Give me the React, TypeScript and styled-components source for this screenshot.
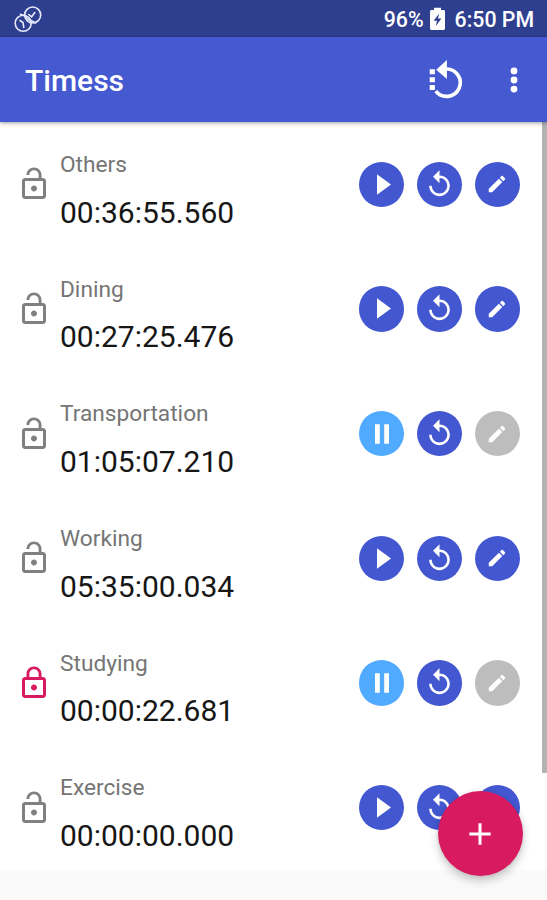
import React from 'react';
import styled, { createGlobalStyle } from 'styled-components';

const Global = createGlobalStyle`
  *, *::before, *::after { box-sizing: border-box; }
  body { margin: 0; background: #fafafa; font-family: Roboto, sans-serif; overflow: hidden; }
  svg { display: block; flex: none; }
`;

const Screen = styled.div`
  position: relative;
  width: 547px;
  height: 900px;
  display: flex;
  flex-direction: column;
  background: #fafafa;
  overflow: hidden;
`;

const StatusBar = styled.header`
  height: 37px;
  flex: none;
  display: flex;
  align-items: center;
  justify-content: space-between;
  padding: 0 13px 0 13px;
  background: #2f3f8f;
  color: #fff;
`;

const StatusInfo = styled.div`
  display: flex;
  align-items: center;
  font-size: 21.3px;
  font-weight: 500;
  line-height: 37px;
  padding-top: 2px;
`;

const BatterySlot = styled.span`
  display: flex;
  margin: 0 10px 3px 6px;
`;

const Toolbar = styled.div`
  height: 85px;
  flex: none;
  z-index: 1;
  display: flex;
  align-items: center;
  padding: 0 29.5px 0 25px;
  background: #4559d0;
  color: #fff;
  box-shadow: 0 1px 4px rgba(0, 0, 0, 0.4);
`;

const Title = styled.h1`
  flex: 1;
  margin: 3px 0 0;
  font-size: 30px;
  font-weight: 500;
  line-height: 40px;
`;

const ToolButton = styled.button`
  display: flex;
  padding: 0;
  border: 0;
  background: none;
  color: inherit;
  & + & { margin-left: 45px; }
`;

const Body = styled.main`
  display: flex;
  height: 748px;
  flex: none;
  background: #fff;
`;

const List = styled.ul`
  flex: 1;
  margin: 0;
  padding: 0;
  list-style: none;
  display: grid;
  grid-template-rows: repeat(6, 1fr);
`;

const Scrollbar = styled.div`
  width: 5px;
  height: 651px;
  background: #b3b3b3;
`;

const Row = styled.li`
  display: flex;
  align-items: center;
  padding: 0 22.3px 0 15.7px;
`;

const LockSlot = styled.span<{ $locked?: boolean }>`
  display: flex;
  width: 44.3px;
  color: ${(p) => (p.$locked ? '#d81b60' : '#808080')};
`;

const Info = styled.div`
  flex: 1;
  display: flex;
  flex-direction: column;
  gap: 11.5px;
  padding-top: 13px;
`;

const Label = styled.span`
  font-size: 22.7px;
  line-height: 32px;
  color: #757575;
`;

const Time = styled.span`
  font-size: 30px;
  line-height: 40px;
  color: #161616;
`;

const Actions = styled.div`
  display: flex;
  gap: 12.6px;
`;

const RoundButton = styled.button<{ $tone: string }>`
  width: 45.2px;
  height: 45.2px;
  padding: 0;
  border: 0;
  border-radius: 50%;
  display: flex;
  align-items: center;
  justify-content: center;
  background: ${(p) => p.$tone};
  color: #fff;
`;

const Fab = styled.button`
  position: absolute;
  right: 24.3px;
  bottom: 24px;
  z-index: 2;
  width: 85px;
  height: 85px;
  padding: 0;
  border: 0;
  border-radius: 50%;
  display: flex;
  align-items: center;
  justify-content: center;
  background: #d81b60;
  box-shadow: 0 5px 10px rgba(0, 0, 0, 0.2), 0 1px 4px rgba(0, 0, 0, 0.08);
`;

const BLUE = '#4357d0';
const SKY = '#50aaff';
const GREY = '#bdbdbd';

const ClocksIcon = () => (
  <svg width="30" height="32" viewBox="0 0 30 32" fill="none" stroke="#e6eafc" strokeWidth="1.6" strokeLinecap="round">
    <circle cx="10.2" cy="20.3" r="8" />
    <circle cx="19.7" cy="12" r="8" />
    <path d="M7 17.500l3 2 .8 5M15.800 11.500l2.800 2.300 3.200-4.300M7.500 11.200c4 .3 5 3.300 7.500 5s4.500 1 7.500 3.800" />
  </svg>
);

const BatteryIcon = () => (
  <svg width="15" height="23" viewBox="0 0 15 23">
    <path fill="#fff" d="M1.4 3H4V.8h7V3h2.6c.8 0 1.4.6 1.4 1.4v17.2c0 .8-.6 1.4-1.4 1.4H1.4C.6 23 0 22.4 0 21.6V4.400C0 3.600.6 3 1.400 3z" />
    <path fill="#2f3f8f" d="M9.200 6.500L3.600 13.700H7L5.800 19l5.600-7.500H8z" />
  </svg>
);

const ResetAllIcon = () => (
  <svg width="36" height="41" viewBox="0 0 36 41">
    <path fill="#fff" d="M.7 10.200h5.200v5H.7zM.7 18.200h5.200v5H.7zM.7 26h5.200v5H.7zM7.200 10.700L17.900 1v19z" />
    <path fill="none" stroke="#fff" strokeWidth="3.700" d="M17 10a13.700 13.700 0 1 1-10.200 22.200" />
  </svg>
);

const MoreIcon = () => (
  <svg width="8" height="26" viewBox="0 0 8 26" fill="#fff">
    <circle cx="4" cy="3.900" r="3.400" />
    <circle cx="4" cy="13" r="3.400" />
    <circle cx="4" cy="22.100" r="3.400" />
  </svg>
);

const LockIcon = ({ locked }: { locked?: boolean }) => (
  <svg width="36" height="36" viewBox="0 0 24 24" fill="currentColor">
    {locked ? (
      <path d="M12 17c1.100 0 2-.9 2-2s-.9-2-2-2-2 .9-2 2 .9 2 2 2zm6-9h-1V6c0-2.760-2.240-5-5-5S7 3.240 7 6v2H6c-1.100 0-2 .9-2 2v10c0 1.100.9 2 2 2h12c1.100 0 2-.9 2-2V10c0-1.100-.9-2-2-2zM8.900 6c0-1.710 1.390-3.100 3.100-3.100s3.100 1.390 3.100 3.100v2H8.900V6zM18 20H6V10h12v10z" />
    ) : (
      <path d="M12 17c1.100 0 2-.9 2-2s-.9-2-2-2-2 .9-2 2 .9 2 2 2zm6-9h-1V6c0-2.760-2.240-5-5-5S7 3.240 7 6h1.900c0-1.710 1.390-3.100 3.100-3.100s3.100 1.390 3.100 3.100v2H6c-1.100 0-2 .9-2 2v10c0 1.100.9 2 2 2h12c1.100 0 2-.9 2-2V10c0-1.100-.9-2-2-2zm0 12H6V10h12v10z" />
    )}
  </svg>
);

const PlayIcon = () => (
  <svg width="18" height="21" viewBox="0 0 18 21" fill="#fff">
    <path d="M4 .2v20.600L18 10.500z" />
  </svg>
);

const PauseIcon = () => (
  <svg width="14" height="20" viewBox="0 0 14 20" fill="#fff">
    <path d="M0 .2h4.800v19.600H0zM9.200 .2H14v19.600H9.200z" />
  </svg>
);

const ReplayIcon = () => (
  <svg width="31" height="31" viewBox="0 0 24 24" fill="#fff">
    <path d="M12 5V1L7 6l5 5V7c3.310 0 6 2.690 6 6s-2.690 6-6 6-6-2.690-6-6H4c0 4.420 3.580 8 8 8s8-3.580 8-8-3.580-8-8-8z" />
  </svg>
);

const EditIcon = () => (
  <svg width="22" height="22" viewBox="0 0 24 24" fill="#fff">
    <path d="M3 17.250V21h3.750L17.810 9.940l-3.750-3.750L3 17.250zM20.710 7.040c.39-.39.39-1.020 0-1.410l-2.340-2.340c-.39-.39-1.020-.39-1.410 0l-1.830 1.830 3.750 3.750 1.830-1.830z" />
  </svg>
);

interface Timer {
  name: string;
  time: string;
  running?: boolean;
  locked?: boolean;
}

const timers: Timer[] = [
  { name: 'Others', time: '00:36:55.560' },
  { name: 'Dining', time: '00:27:25.476' },
  { name: 'Transportation', time: '01:05:07.210', running: true },
  { name: 'Working', time: '05:35:00.034' },
  { name: 'Studying', time: '00:00:22.681', running: true, locked: true },
  { name: 'Exercise', time: '00:00:00.000' },
];

const TimerRow = ({ name, time, running, locked }: Timer) => (
  <Row>
    <LockSlot $locked={locked}>
      <LockIcon locked={locked} />
    </LockSlot>
    <Info>
      <Label>{name}</Label>
      <Time>{time}</Time>
    </Info>
    <Actions>
      <RoundButton $tone={running ? SKY : BLUE} aria-label={running ? 'Pause' : 'Start'}>
        {running ? <PauseIcon /> : <PlayIcon />}
      </RoundButton>
      <RoundButton $tone={BLUE} aria-label="Reset">
        <ReplayIcon />
      </RoundButton>
      <RoundButton $tone={running ? GREY : BLUE} disabled={running} aria-label="Edit">
        <EditIcon />
      </RoundButton>
    </Actions>
  </Row>
);

export default function App() {
  return (
    <>
      <Global />
      <Screen>
        <StatusBar>
          <ClocksIcon />
          <StatusInfo>
            <span>96%</span>
            <BatterySlot>
              <BatteryIcon />
            </BatterySlot>
            <span>6:50 PM</span>
          </StatusInfo>
        </StatusBar>
        <Toolbar>
          <Title>Timess</Title>
          <ToolButton aria-label="Reset all">
            <ResetAllIcon />
          </ToolButton>
          <ToolButton aria-label="More options">
            <MoreIcon />
          </ToolButton>
        </Toolbar>
        <Body>
          <List>
            {timers.map((timer) => (
              <TimerRow key={timer.name} {...timer} />
            ))}
          </List>
          <Scrollbar />
        </Body>
        <Fab aria-label="Add timer">
          <svg width="22" height="22" viewBox="0 0 22 22" stroke="#fff" strokeWidth="3">
            <path d="M11 .3v21.400M.3 11h21.400" />
          </svg>
        </Fab>
      </Screen>
    </>
  );
}
